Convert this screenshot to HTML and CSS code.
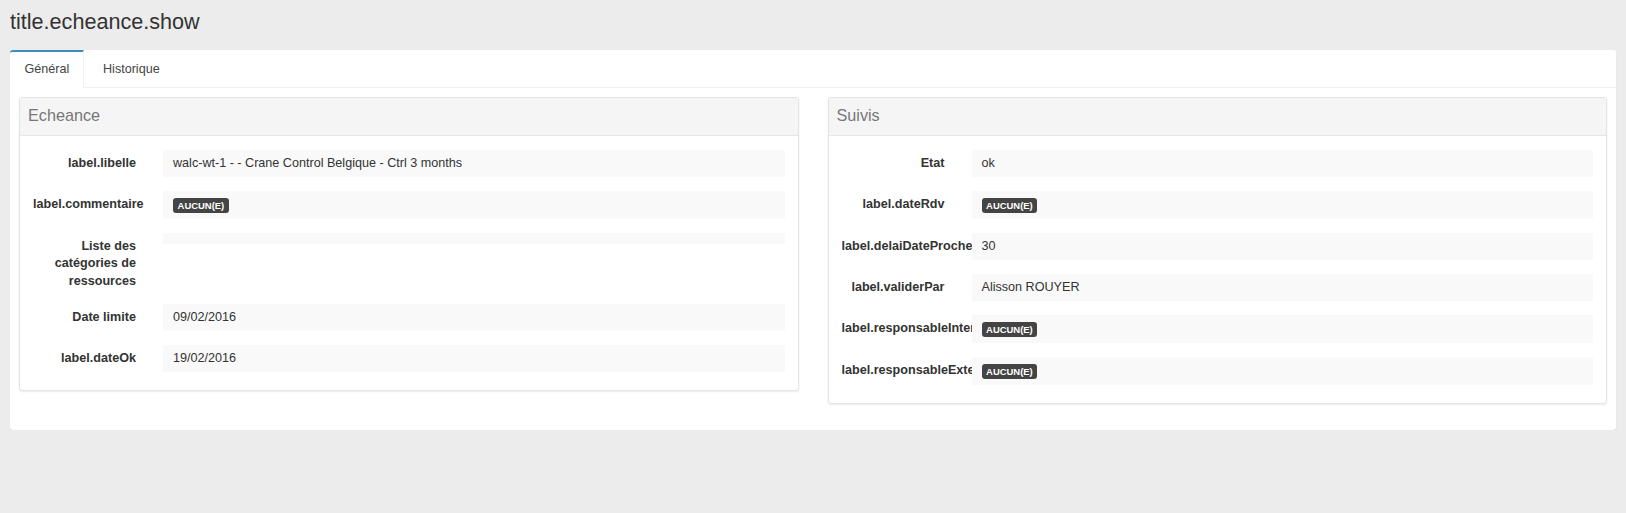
FILE: index.html
```html
<!DOCTYPE html>
<html lang="fr">
<head>
<meta charset="utf-8">
<title>title.echeance.show</title>
<link rel="stylesheet" href="styles.css">
</head>
<body>
<div class="page">
  <h1 class="page-title">title.echeance.show</h1>
  <div class="tabs-box">
    <ul class="tabs">
      <li class="tab tab-active">Général</li>
      <li class="tab">Historique</li>
    </ul>
    <div class="tab-content">
      <section class="panel">
        <div class="panel-heading">Echeance</div>
        <div class="panel-body">
          <div class="field">
            <div class="field-label">label.libelle</div>
            <div class="field-value">walc-wt-1 - - Crane Control Belgique - Ctrl 3 months</div>
          </div>
          <div class="field">
            <div class="field-label">label.commentaire</div>
            <div class="field-value field-value-badge"><span class="badge">AUCUN(E)</span></div>
          </div>
          <div class="field">
            <div class="field-label">Liste des catégories de ressources</div>
            <div class="field-value"></div>
          </div>
          <div class="field">
            <div class="field-label">Date limite</div>
            <div class="field-value">09/02/2016</div>
          </div>
          <div class="field">
            <div class="field-label">label.dateOk</div>
            <div class="field-value">19/02/2016</div>
          </div>
        </div>
      </section>
      <section class="panel">
        <div class="panel-heading">Suivis</div>
        <div class="panel-body">
          <div class="field">
            <div class="field-label">Etat</div>
            <div class="field-value">ok</div>
          </div>
          <div class="field">
            <div class="field-label">label.dateRdv</div>
            <div class="field-value field-value-badge"><span class="badge">AUCUN(E)</span></div>
          </div>
          <div class="field">
            <div class="field-label">label.delaiDateProche</div>
            <div class="field-value">30</div>
          </div>
          <div class="field">
            <div class="field-label">label.validerPar</div>
            <div class="field-value">Alisson ROUYER</div>
          </div>
          <div class="field">
            <div class="field-label">label.responsableInterne</div>
            <div class="field-value field-value-badge"><span class="badge">AUCUN(E)</span></div>
          </div>
          <div class="field">
            <div class="field-label">label.responsableExterne</div>
            <div class="field-value field-value-badge"><span class="badge">AUCUN(E)</span></div>
          </div>
        </div>
      </section>
    </div>
  </div>
</div>
</body>
</html>
```
FILE: styles.css
```css
* { box-sizing: border-box; }
html, body { margin: 0; padding: 0; }
body {
  background: #ececec;
  font-family: "Liberation Sans", Arial, sans-serif;
  font-size: 12.6px;
  color: #333;
}
.page { padding: 0 10px; }
.page-title {
  margin: 0;
  padding-top: 10px;
  font-size: 21.6px;
  line-height: 24px;
  font-weight: normal;
  color: #333;
}
.tabs-box {
  margin-top: 16px;
  background: #fff;
  border-radius: 3px;
  box-shadow: 0 1px 1px rgba(0,0,0,0.12);
}
.tabs {
  list-style: none;
  margin: 0;
  padding: 0;
  display: flex;
  border-bottom: 1px solid #f0f0f0;
}
.tab {
  border-top: 2px solid transparent;
  padding: 8px 14.4px 10px;
  line-height: 18px;
  color: #444;
  margin-right: 5px;
  margin-bottom: -1px;
}
.tab-active {
  border-top-color: #3c8dbc;
  border-right: 1px solid #f0f0f0;
  border-top-left-radius: 3px;
  background: #fff;
  padding-right: 13.4px;
  margin-right: 5px;
  color: #444;
}
.tab-content {
  padding: 9px 9px 26px;
  display: grid;
  grid-template-columns: 1fr 1fr;
  column-gap: 29px;
  align-items: start;
}
.panel {
  background: #fff;
  border: 1px solid #e4e4e4;
  border-radius: 3px;
  box-shadow: 0 1px 2px rgba(0,0,0,0.08);
}
.panel-heading {
  background: #f5f5f5;
  border-bottom: 1px solid #e6e6e6;
  padding: 8px 8px 11px;
  font-size: 16.2px;
  line-height: 18px;
  color: #777;
}
.panel-body {
  display: grid;
  row-gap: 14px;
  padding: 14px 13px 18px;
}
.field {
  display: grid;
  grid-template-columns: 130px 1fr;
  align-items: start;
}
.field-label {
  min-width: 0;
  overflow: hidden;
  padding: 5px 27px 0 0;
  line-height: 17.33px;
  font-weight: bold;
  text-align: right;
  color: #333;
}
.field-value {
  background: #f9f9f9;
  padding: 5px 10px 6px;
  line-height: 16px;
  color: #333;
}
.field-value-badge {
  padding-top: 6px;
}
.badge {
  display: inline-block;
  vertical-align: middle;
  background: #444;
  color: #fff;
  font-size: 9.45px;
  font-weight: bold;
  line-height: 1;
  padding: 3px 4.6px 2.5px;
  border-radius: 3px;
}
```
